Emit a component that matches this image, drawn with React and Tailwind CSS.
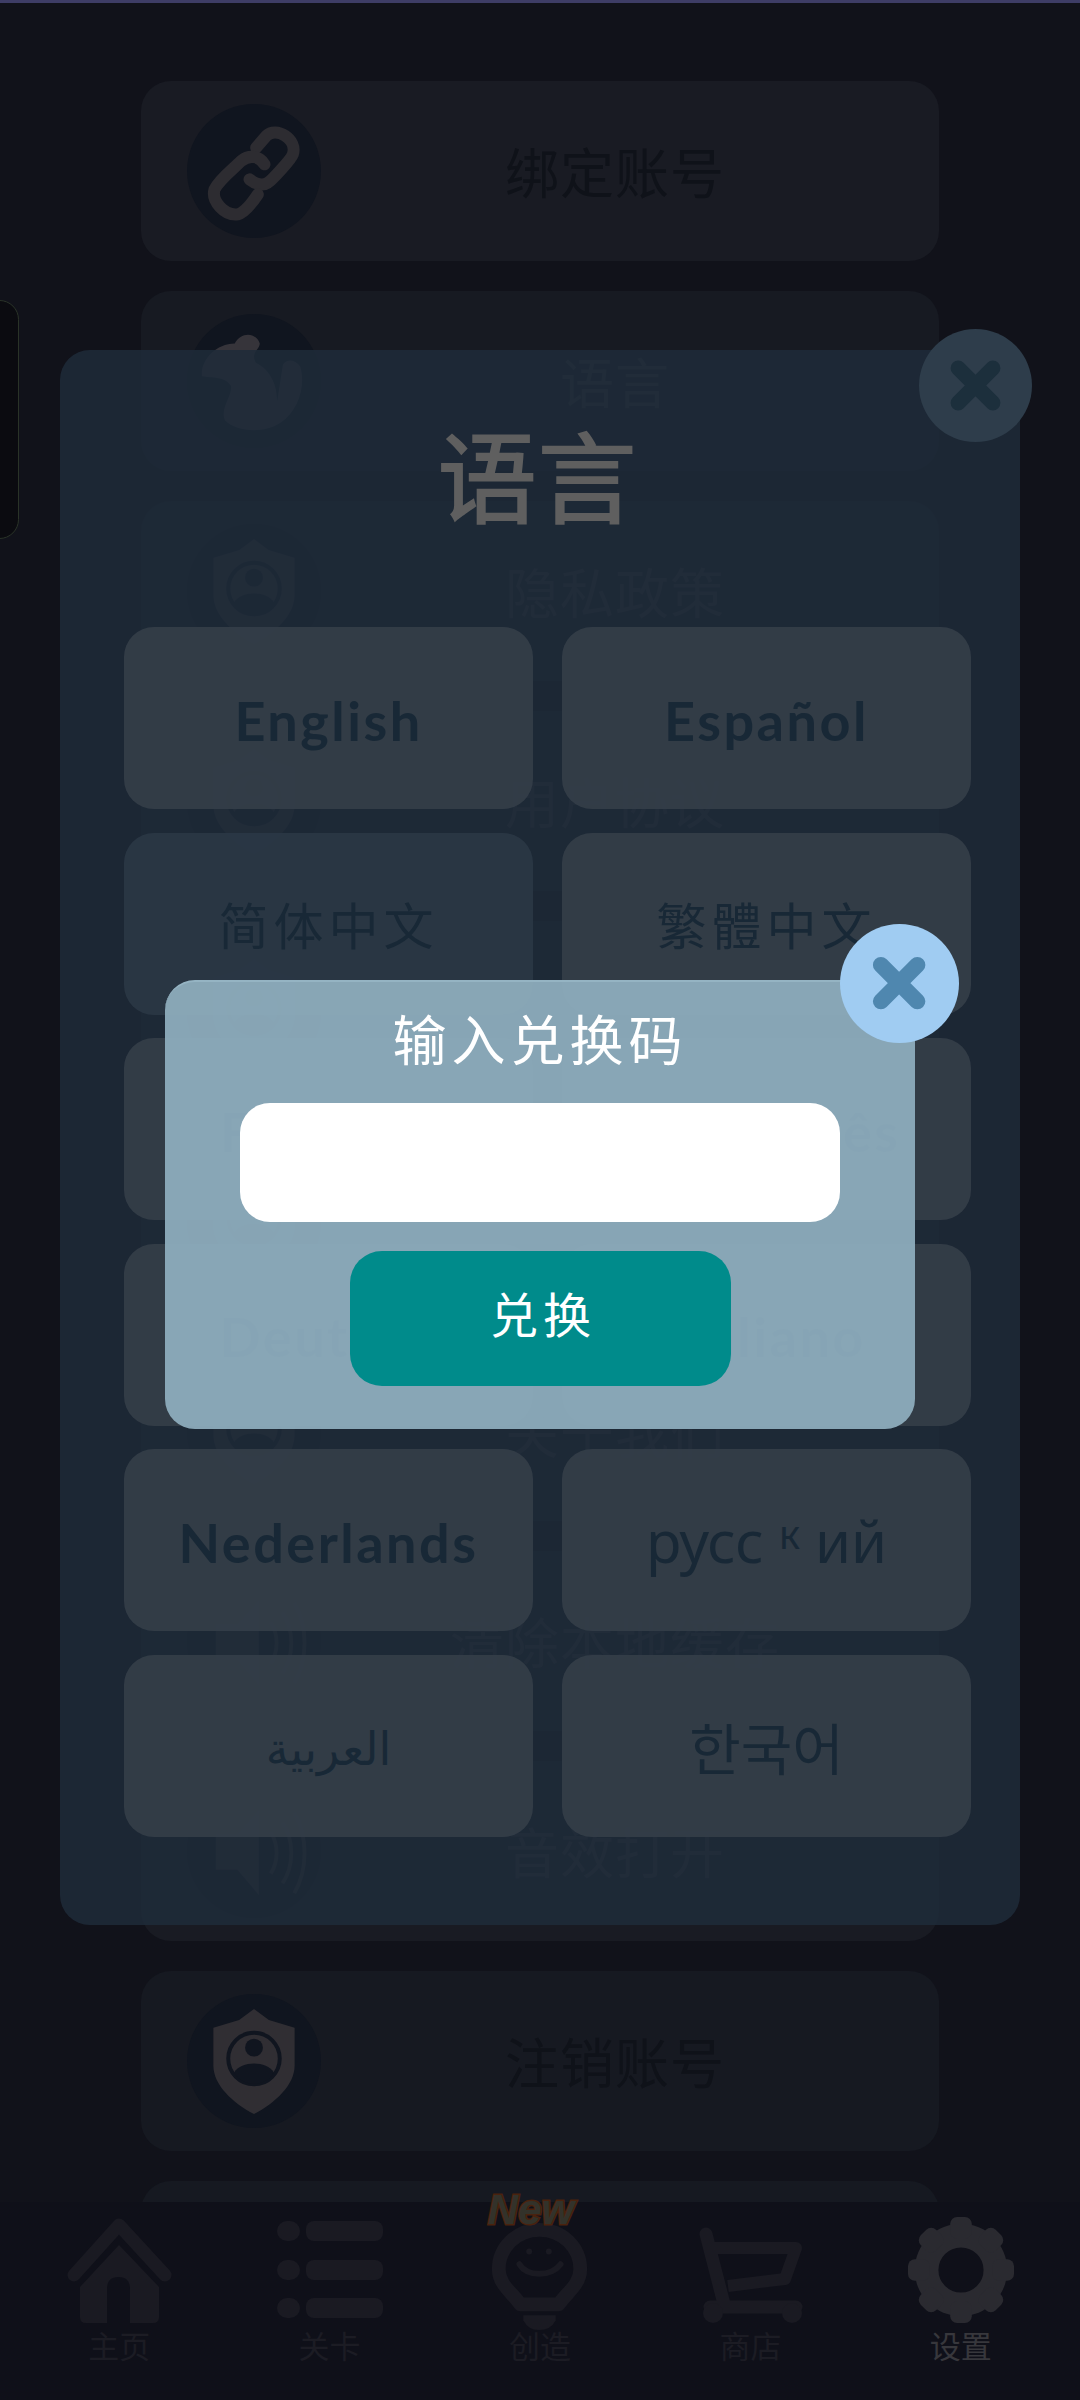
const cjk = "font-['Noto_Sans_CJK_SC','Noto_Sans',sans-serif]";

function ChainIcon() {
  return (
    <svg viewBox="110 90 290 300" className="h-[100px] w-[97px]" fill="none" stroke="#2d2c31" strokeWidth="36" strokeLinecap="round">
      <path d="M260 170 L290 135 C320 105 385 145 370 190 C365 205 305 270 295 275 C280 285 260 280 240 265" />
      <path d="M285 220 C270 195 240 190 215 210 C190 235 150 265 135 295 C125 330 165 375 205 370 C225 365 245 340 265 310" />
    </svg>
  );
}

function ShieldUser() {
  return (
    <svg viewBox="0 0 90 108" className="h-[107px] w-[90px]">
      <path d="M45 1 L60 12 L86 20 V58 C86 78 66 96 45 107 C24 96 4 78 4 58 V20 L30 12 Z" fill="#302e33" />
      <circle cx="45" cy="51" r="26" fill="none" stroke="#10151f" strokeWidth="4" />
      <circle cx="45" cy="40" r="9" fill="#10151f" />
      <path d="M25 65 C32 53 58 53 65 65 C58 80 32 80 25 65 Z" fill="#10151f" />
    </svg>
  );
}

function Globe() {
  return (
    <svg viewBox="0 0 120 110" className="h-[106px] w-[116px]" fill="#36343a">
      <path d="M40 16 C46 4 62 4 66 16 C66 22 56 26 62 36 C78 44 84 60 84 76 L90 38 C94 32 102 32 108 40 C114 60 106 86 88 98 C70 110 42 108 30 96 C24 84 38 70 36 60 C30 50 16 52 6 50 C4 34 20 16 40 16 Z" />
    </svg>
  );
}

function Speaker() {
  return (
    <svg viewBox="0 0 110 110" className="h-[108px] w-[108px]" fill="none">
      <path d="M16 38 H38 L60 14 V100 L38 74 H16 Z" fill="#302e33" />
      <path d="M72 36 C80 48 80 66 72 78 M84 26 C96 44 96 70 84 88 M96 16 C110 40 110 74 96 98" stroke="#302e33" strokeWidth="4" />
    </svg>
  );
}

function SettingRow({ label, icon, rowClass = "bg-[#191b23]", textClass = "text-[#30313a]" }) {
  return (
    <div className={`flex h-[180px] shrink-0 items-center rounded-[30px] pl-[46px] pr-[30px] ${rowClass}`}>
      <div className="flex h-[134px] w-[134px] shrink-0 items-center justify-center rounded-full bg-[#10151f]">
        {icon}
      </div>
      <div className={`flex-1 text-center text-[54px] leading-none tracking-[1px] ${textClass}`}>{label}</div>
    </div>
  );
}

function HomeIcon() {
  return (
    <svg viewBox="0 0 105 106" className="h-[106px] w-[105px]" fill="none">
      <path d="M7 58 L52 8 L98 58" stroke="#1a1a22" strokeWidth="13" strokeLinecap="round" strokeLinejoin="round" />
      <path d="M52 28 L92 70 V100 Q92 106 86 106 H63 V72 Q63 60 51.5 60 Q40 60 40 72 V106 H19 Q13 106 13 100 V70 Z" fill="#1a1a22" />
    </svg>
  );
}

function ListIcon() {
  return (
    <svg viewBox="0 0 106 98" className="h-[98px] w-[106px]" fill="#1a1a22">
      <rect x="0" y="0" width="23" height="20" rx="10" />
      <rect x="29" y="0" width="77" height="20" rx="8" />
      <rect x="0" y="39" width="23" height="20" rx="10" />
      <rect x="29" y="39" width="77" height="20" rx="8" />
      <rect x="0" y="77" width="23" height="20" rx="10" />
      <rect x="29" y="77" width="77" height="20" rx="8" />
    </svg>
  );
}

function BulbIcon() {
  return (
    <svg viewBox="0 0 97 110" className="mt-[12px] h-[108px] w-[97px]" fill="none">
      <path d="M48.5 8 C72 8 90 26 90 48 C90 64 76 72 68 84 H29 C21 72 7 64 7 48 C7 26 25 8 48.5 8 Z" stroke="#1a1a22" strokeWidth="14" strokeLinejoin="round" />
      <circle cx="38" cy="30" r="3" fill="#1a1a22" />
      <circle cx="58" cy="30" r="3" fill="#1a1a22" />
      <path d="M28 43 C36 56 60 56 70 43" stroke="#1a1a22" strokeWidth="6" strokeLinecap="round" />
      <path d="M32 95 H65 V100 Q60 110 48 110 Q37 110 32 100 Z" fill="#1a1a22" />
    </svg>
  );
}

function CartIcon() {
  return (
    <svg viewBox="0 0 105 98" className="mt-[10px] h-[98px] w-[105px]" fill="none">
      <path d="M8 8 L26 78" stroke="#1a1a22" strokeWidth="13" strokeLinecap="round" />
      <path d="M16 22 H98 L87 53 L30 60" stroke="#1a1a22" strokeWidth="12" strokeLinejoin="round" />
      <path d="M12 81 H98" stroke="#1a1a22" strokeWidth="13" strokeLinecap="round" />
      <circle cx="15" cy="87" r="10" fill="#1a1a22" />
      <circle cx="94" cy="87" r="10" fill="#1a1a22" />
    </svg>
  );
}

function GearIcon() {
  const teeth = [0, 45, 90, 135, 180, 225, 270, 315];
  return (
    <svg viewBox="0 0 108 108" className="h-[108px] w-[106px]" fill="#2a2a30">
      <circle cx="54" cy="54" r="35" fill="none" stroke="#2a2a30" strokeWidth="24" />
      {teeth.map((deg) => (
        <rect key={deg} x="43" y="0" width="22" height="22" rx="7" transform={`rotate(${deg} 54 54)`} />
      ))}
    </svg>
  );
}

function NavItem({ label, icon, active, badge }) {
  return (
    <div className="relative flex flex-col items-center">
      {badge && (
        <span className="absolute left-[50%] top-[-27px] z-10 ml-[-9px] -translate-x-1/2 font-['Liberation_Sans',sans-serif] text-[42px] font-bold italic leading-none text-[#33322a] [-webkit-text-stroke:3px_#4a220e] [paint-order:stroke]">
          New
        </span>
      )}
      <div className="flex h-[108px] items-center justify-center">{icon}</div>
      <span className={`mt-[3px] text-[31px] leading-[36px] ${active ? "text-[#37373c]" : "text-[#1c1c24]"}`}>
        {label}
      </span>
    </div>
  );
}

function CloseButton({ className, barClass }) {
  return (
    <button className={`absolute flex items-center justify-center rounded-full ${className}`}>
      <svg viewBox="0 0 60 60" className="h-[54%] w-[54%]" fill="none">
        <path d="M13 13 L47 47 M47 13 L13 47" className={barClass} strokeWidth="15" strokeLinecap="round" />
      </svg>
    </button>
  );
}

function LangButton({ active, children, className = "" }) {
  return (
    <button
      className={`flex h-[182px] items-center justify-center rounded-[30px] text-[#182836] ${
        active ? "bg-[#2a3744]/95" : "bg-[#343d48]/95"
      } ${className}`}
    >
      {children}
    </button>
  );
}

const latin = "pt-[4px] font-['Lato',sans-serif] text-[54px] font-bold tracking-[2.5px]";
const zh = "text-[50px] tracking-[5px]";

export default function App() {
  return (
    <div className={`relative flex h-[2400px] w-[1080px] flex-col overflow-hidden bg-[#11121a] ${cjk}`}>
      <div className="h-[3px] shrink-0 bg-[#3e3d66]" />

      <div className="flex min-h-0 flex-1 flex-col gap-[30px] overflow-hidden px-[141px] pt-[78px]">
        <SettingRow label="绑定账号" icon={<ChainIcon />} textClass="text-[#0f1219]" />
        <SettingRow label="语言" icon={<Globe />} rowClass="bg-[#171a22]" />
        <SettingRow label="隐私政策" icon={<ShieldUser />} />
        <SettingRow label="用户协议" icon={<ShieldUser />} />
        <SettingRow label="兑换码" icon={<ShieldUser />} />
        <SettingRow label="联系我们" icon={<ShieldUser />} />
        <SettingRow label="关于我们" icon={<ShieldUser />} />
        <SettingRow label="清除本地缓存" icon={<Speaker />} />
        <SettingRow label="音效打开" icon={<Speaker />} />
        <SettingRow label="注销账号" icon={<ShieldUser />} rowClass="bg-[#161921]" textClass="text-[#0f1219]" />
        <SettingRow label="" icon={null} rowClass="bg-[#161921]" />
      </div>

      <nav className="relative grid h-[198px] shrink-0 grid-cols-5 bg-[#0f1019] px-[14px] pt-[14px]">
        <NavItem label="主页" icon={<HomeIcon />} />
        <NavItem label="关卡" icon={<ListIcon />} />
        <NavItem label="创造" icon={<BulbIcon />} badge />
        <NavItem label="商店" icon={<CartIcon />} />
        <NavItem label="设置" icon={<GearIcon />} active />
      </nav>

      {/* left edge tab */}
      <div className="absolute left-[-20px] top-[300px] h-[239px] w-[39px] rounded-[20px] border border-[#2a3328] bg-[#0b0b10]" />

      {/* language dialog */}
      <div className="absolute left-[60px] top-[350px] h-[1575px] w-[960px] rounded-[30px] bg-[#1e2b3a]/85 pl-[64px]">
        <h1 className="mb-[104px] mr-[70px] mt-[73px] text-center text-[100px] font-medium leading-[100px] text-[#5f5f5f]">
          语言
        </h1>
        <div className="grid grid-cols-[409px_409px] gap-x-[29px] gap-y-[23.6px]">
          <LangButton className={latin}>English</LangButton>
          <LangButton className={latin}>Español</LangButton>
          <LangButton active className={zh}>简体中文</LangButton>
          <LangButton className={zh}>繁體中文</LangButton>
          <LangButton className={latin}>Français</LangButton>
          <LangButton className={latin}>Português</LangButton>
          <LangButton className={latin}>Deutsch</LangButton>
          <LangButton className={latin}>Italiano</LangButton>
          <LangButton className={latin}>Nederlands</LangButton>
          <LangButton className="font-['Noto_Sans',sans-serif] text-[58px]">
            русс<span className="relative top-[-6px] mx-[15px] text-[40px]">к</span>ий
          </LangButton>
          <LangButton className="pt-[8px] font-['DejaVu_Sans',sans-serif] text-[46px]">العربية</LangButton>
          <LangButton className="font-['Noto_Sans_CJK_KR',sans-serif] text-[56px]">한국어</LangButton>
        </div>
      </div>
      <CloseButton className="left-[919px] top-[329px] h-[113px] w-[113px] bg-[#2e3d4b]" barClass="stroke-[#1c2f3c]" />

      {/* redeem code dialog */}
      <div className="absolute left-[165px] top-[980px] flex h-[449px] w-[750px] flex-col items-center rounded-[30px] border-t-2 border-[#95b4c3] bg-[#8faebe]/93">
        <h2 className="mt-[24px] text-[54px] leading-[64px] tracking-[5px] text-white">输入兑换码</h2>
        <input className="mt-[33px] h-[119px] w-[600px] rounded-[30px] bg-white outline-none" />
        <button className="mt-[29px] flex h-[135px] w-[381px] items-center justify-center rounded-[32px] bg-[#008b8b] pb-[14px] pl-[6px] text-[48px] tracking-[5px] text-white">
          兑换
        </button>
      </div>
      <CloseButton className="left-[840px] top-[924px] h-[119px] w-[119px] bg-[#a0ccf2]" barClass="stroke-[#4f87af]" />
    </div>
  );
}
